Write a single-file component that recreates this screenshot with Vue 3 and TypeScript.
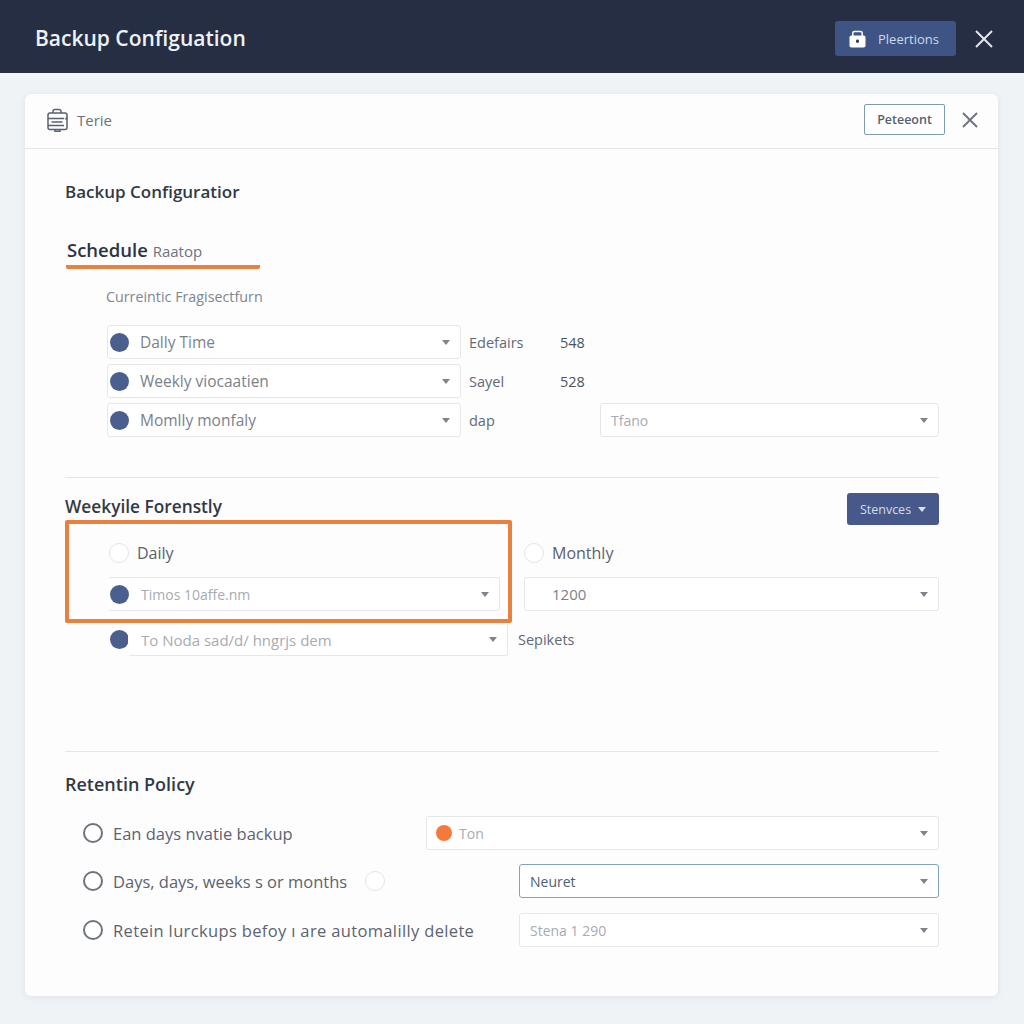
<script setup lang="ts">
interface ScheduleRow {
  label: string;
  side: string;
  value?: string;
}

interface RetentionRow {
  label: string;
  select: string;
  kind: string;
  dot?: boolean;
  extraRadio?: boolean;
}

const scheduleRows: ScheduleRow[] = [
  { label: "Dally Time", side: "Edefairs", value: "548" },
  { label: "Weekly viocaatien", side: "Sayel", value: "528" },
  { label: "Momlly monfaly", side: "dap" },
];

const retentionRows: RetentionRow[] = [
  { label: "Ean days nvatie backup", select: "Ton", kind: "wide", dot: true },
  { label: "Days, days, weeks s or months", select: "Neuret", kind: "focus", extraRadio: true },
  { label: "Retein lurckups befoy ı are automalilly delete", select: "Stena 1 290", kind: "muted" },
];
</script>

<template>
  <div class="page">
    <header class="topbar">
      <h1>Backup Configuation</h1>
      <button class="perm-btn">
        <svg width="17" height="18" viewBox="0 0 17 18">
          <path d="M3.8 6V3a1.6 1.6 0 0 1 1.6-1.6h6.2A1.6 1.6 0 0 1 13.2 3v3" fill="none" stroke="#fff" stroke-width="1.5" />
          <rect x="0.5" y="5.5" width="16" height="12" rx="1.8" fill="#fff" />
          <rect x="7" y="9.5" width="3" height="3.4" rx="1.4" fill="#2c3a57" />
        </svg>
        <span>Pleertions</span>
      </button>
      <svg class="close-top" width="18" height="18" viewBox="0 0 18 18">
        <path d="M1 1l16 16M17 1L1 17" stroke="#e4e7ec" stroke-width="2" />
      </svg>
    </header>

    <main class="content">
      <section class="card">
        <div class="card-head">
          <svg width="22" height="24" viewBox="0 0 22 24" fill="none" stroke="#5a6270" stroke-width="1.5">
            <path d="M6 5V3.2A1.8 1.8 0 0 1 7.8 1.4h4.4A1.8 1.8 0 0 1 14 3.2V5" />
            <rect x="1" y="5" width="19" height="16.5" rx="2" />
            <path d="M1 10.5h16M4.5 14h11M1 17.5h16M20 9.5l-1.5 2M8 21.5v1.8h5v-1.8" />
          </svg>
          <span class="card-name">Terie</span>
          <button class="outline-btn">Peteeont</button>
          <svg class="close-card" width="16" height="16" viewBox="0 0 16 16">
            <path d="M1 1l14 14M15 1L1 15" stroke="#6c7480" stroke-width="1.9" />
          </svg>
        </div>

        <div class="card-body">
          <h2 class="title">Backup Configuratior</h2>
          <div class="tab"><b>Schedule</b> <span>Raatop</span></div>
          <p class="hint">Curreintic Fragisectfurn</p>

          <div class="schedule">
            <div v-for="row in scheduleRows" :key="row.label" class="schedule-row">
              <div class="select schedule-select">
                <i class="dot"></i>
                <span class="val">{{ row.label }}</span>
                <i class="caret"></i>
              </div>
              <span class="side">{{ row.side }}</span>
              <span v-if="row.value" class="num">{{ row.value }}</span>
              <div v-else class="select trano">
                <span class="val faint">Tfano</span>
                <i class="caret"></i>
              </div>
            </div>
          </div>

          <hr class="rule first" />

          <div class="freq-head">
            <h3>Weekyile Forenstly</h3>
            <button class="services">Stenvces <i class="caret light"></i></button>
          </div>

          <div class="freq">
            <div class="highlight">
              <label class="choice"><i class="radio pale"></i>Daily</label>
              <div class="select in-box">
                <i class="dot"></i>
                <span class="val faint">Timos 10affe.nm</span>
                <i class="caret"></i>
              </div>
            </div>
            <div class="freq-right">
              <label class="choice monthly"><i class="radio pale"></i>Monthly</label>
              <div class="select time-select">
                <span class="val">1200</span>
                <i class="caret"></i>
              </div>
            </div>
          </div>

          <div class="node-row">
            <i class="dot"></i>
            <div class="select node-select">
              <span class="val faint">To Noda sad/d/ hngrjs dem</span>
              <i class="caret"></i>
            </div>
            <span class="side">Sepikets</span>
          </div>

          <hr class="rule second" />

          <h3 class="policy">Retentin Policy</h3>
          <div class="retention">
            <div v-for="row in retentionRows" :key="row.label" class="retention-row">
              <i class="radio strong"></i>
              <span class="ret-label">{{ row.label }}</span>
              <i v-if="row.extraRadio" class="radio pale extra"></i>
              <div class="select" :class="row.kind">
                <i v-if="row.dot" class="dot orange"></i>
                <span class="val faint">{{ row.select }}</span>
                <i class="caret"></i>
              </div>
            </div>
          </div>
        </div>
      </section>
    </main>
  </div>
</template>

<style>
html,
body {
  margin: 0;
  background: #f0f3f6;
}
</style>

<style scoped>
.page {
  width: 1024px;
  height: 1024px;
  overflow: hidden;
  background: #f0f3f6;
  font-family: "Open Sans", "Liberation Sans", sans-serif;
  color: #3a414e;
}

.topbar {
  height: 73px;
  box-sizing: border-box;
  display: flex;
  align-items: center;
  padding: 4px 31px 0 35px;
  background: #262e44;
}

.topbar h1 {
  margin: -2px auto 0 0;
  font-size: 21px;
  font-weight: 600;
  color: #eff1f4;
}

.perm-btn {
  width: 121px;
  height: 35px;
  margin-right: 19px;
  padding: 0 0 0 14px;
  display: flex;
  align-items: center;
  gap: 12px;
  border: none;
  border-radius: 3px;
  background: #3d5485;
  color: #cfd8e6;
  font: 13px "Open Sans", sans-serif;
}

.content {
  padding: 21px 26px 0 25px;
}

.card {
  height: 902px;
  background: #fdfdfe;
  border-radius: 6px;
  box-shadow: 0 1px 6px rgba(60, 70, 90, 0.1);
}

.card-head {
  height: 55px;
  box-sizing: border-box;
  display: flex;
  align-items: center;
  padding: 0 20px 3px 22px;
  border-bottom: 1px solid #e3e6ea;
}

.card-name {
  margin: 0 auto 0 8px;
  font-size: 15px;
  color: #6b727d;
}

.outline-btn {
  width: 81px;
  height: 31px;
  margin-right: 17px;
  padding: 0;
  background: #fff;
  border: 1px solid #7f9cab;
  border-radius: 2px;
  color: #566070;
  font: 600 12.5px "Open Sans", sans-serif;
}

.card-body {
  padding: 31px 59px 0 40px;
}

.title {
  margin: 0 0 34px;
  font-size: 17px;
  line-height: 24px;
  font-weight: 600;
  color: #333944;
}

.tab {
  width: 193px;
  margin-left: 1px;
  padding: 0 0 2px 1px;
  border-bottom: 4px solid #e8813f;
  border-radius: 2px;
  line-height: 24px;
  font-size: 18.5px;
  white-space: nowrap;
}

.tab b {
  font-weight: 600;
  color: #2d333e;
}

.tab span {
  font-size: 15px;
  color: #6d7380;
}

.hint {
  margin: 18px 0 18px 41px;
  font-size: 14.3px;
  line-height: 20px;
  color: #80868f;
}

.schedule {
  display: flex;
  flex-direction: column;
  gap: 5px;
  padding-left: 42px;
}

.schedule-row {
  display: flex;
  align-items: center;
  height: 34px;
}

.select {
  height: 34px;
  box-sizing: border-box;
  display: flex;
  align-items: center;
  padding: 0 10px 0 2px;
  background: #fff;
  border: 1px solid #e5e7ea;
  border-radius: 3px;
}

.schedule-select {
  width: 354px;
  margin-right: 8px;
}

.dot {
  width: 19px;
  height: 19px;
  flex: none;
  border-radius: 50%;
  background: #4a5f8e;
}

.dot.orange {
  background: #f47a3c;
  width: 16px;
  height: 16px;
  margin: 0 7px 0 6px;
}

.val {
  font-size: 15.5px;
  color: #7b818b;
  white-space: nowrap;
}

.schedule-select .val {
  margin-left: 11px;
}

.faint {
  font-size: 14px;
  color: #a7abb2;
}

.caret {
  width: 0;
  height: 0;
  flex: none;
  margin-left: auto;
  border-left: 4.5px solid transparent;
  border-right: 4.5px solid transparent;
  border-top: 5px solid #7e838c;
}

.caret.light {
  margin-left: 7px;
  border-top-color: #dbe2ee;
}

.side {
  width: 91px;
  font-size: 14.5px;
  color: #626975;
}

.num {
  font-size: 14.5px;
  color: #4d5460;
}

.trano {
  width: 339px;
  margin-left: auto;
  padding-left: 10px;
}

.rule {
  height: 1px;
  margin: 0;
  border: none;
  background: #e3e6ea;
}

.rule.first {
  margin-top: 40px;
}

.freq-head {
  display: flex;
  justify-content: space-between;
  align-items: flex-start;
  height: 32px;
  margin: 15px 0 -5px;
}

.freq-head h3,
.policy {
  margin: 0;
  font-size: 17.3px;
  line-height: 28px;
  font-weight: 600;
  color: #333944;
}

.services {
  width: 92px;
  height: 32px;
  padding: 0;
  border: none;
  border-radius: 3px;
  display: flex;
  align-items: center;
  justify-content: center;
  background: #46598a;
  color: #d5dcea;
  font: 12.5px "Open Sans", sans-serif;
}

.freq {
  display: flex;
  gap: 12px;
}

.highlight {
  width: 447px;
  height: 103px;
  box-sizing: border-box;
  padding: 19px 8px 0 40px;
  border: 4px solid #e8813f;
  border-radius: 2px;
}

.choice {
  height: 20px;
  display: flex;
  align-items: center;
  gap: 8px;
  font-size: 16px;
  color: #5a616c;
}

.radio {
  width: 20px;
  height: 20px;
  flex: none;
  box-sizing: border-box;
  border-radius: 50%;
  background: #fff;
}

.radio.pale {
  border: 1.5px solid #e2e4e7;
}

.radio.strong {
  border: 2px solid #6e747e;
}

.in-box {
  margin: 14px 0 0 -1px;
  border-left-color: transparent;
  padding-left: 1px;
}

.in-box .val {
  margin-left: 12px;
}

.freq-right {
  width: 415px;
  padding-top: 23px;
}

.time-select {
  margin-top: 14px;
  padding-left: 27px;
}

.time-select .val {
  font-size: 15px;
}

.node-row {
  height: 33px;
  display: flex;
  align-items: center;
  padding-left: 45px;
}

.node-select {
  width: 380px;
  height: 33px;
  margin: 0 10px 0 -1px;
  padding-left: 12px;
  border-left-color: transparent;
  border-top-color: transparent;
}

.node-select .val {
  font-size: 15px;
}

.rule.second {
  margin-top: 95px;
}

.policy {
  margin: 18px 0 18px;
  font-size: 18px;
}

.retention {
  display: flex;
  flex-direction: column;
  gap: 14px;
  padding-left: 18px;
}

.retention-row {
  display: flex;
  align-items: center;
  height: 34px;
}

.retention-row:last-child {
  margin-top: 1px;
}

.retention-row:last-child .ret-label {
  letter-spacing: 0.35px;
}

.ret-label {
  margin-left: 10px;
  font-size: 16.5px;
  color: #5c636e;
  white-space: nowrap;
}

.extra {
  margin-left: 18px;
}

.retention-row .select {
  margin-left: auto;
  padding-left: 10px;
}

.retention-row .wide {
  width: 513px;
  padding-left: 3px;
}

.retention-row .focus {
  width: 420px;
  border-color: #7fa6b8;
}

.retention-row .focus .val {
  color: #4d6072;
}

.retention-row .muted {
  width: 420px;
}
</style>
